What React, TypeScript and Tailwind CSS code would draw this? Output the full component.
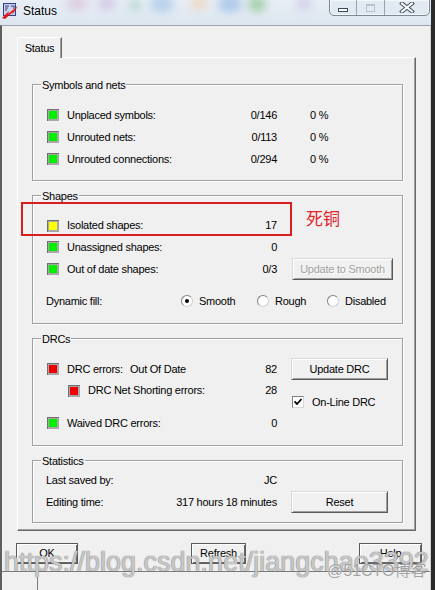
import type { ReactNode } from 'react';

const FONT = "font-['Liberation_Sans',Arial,sans-serif]";

// LED colours, written out so Tailwind picks them up
const ledColor: Record<string, string> = {
  green: 'bg-[#00f000]',
  yellow: 'bg-[#ffff00]',
  red: 'bg-[#ee0000]',
};

function Led({ color }: { color: string }) {
  return (
    <div className="w-3 h-3 shrink-0 bg-[#a8a8a8] p-[2px] shadow-[inset_1px_1px_#707070]">
      <div className={`w-full h-full ${ledColor[color]}`} />
    </div>
  );
}

function WinButton({
  className,
  children,
  disabled,
  strong,
}: {
  className: string;
  children: ReactNode;
  disabled?: boolean;
  strong?: boolean;
}) {
  const frame = strong
    ? 'border border-[#5a5a5a] shadow-[inset_1px_1px_#fff,inset_-1px_-1px_#6a6a6a]'
    : 'border border-t-[#d8d8d8] border-l-[#d8d8d8] border-r-[#5a5a5a] border-b-[#5a5a5a] shadow-[inset_1px_1px_#fff,inset_-1px_-1px_#a0a0a0]';
  return (
    <div
      className={`flex items-center justify-center shrink-0 bg-[#f0f0f0] ${frame} ${className} ${
        disabled ? 'text-[#a0a0a0] [text-shadow:1px_1px_#fff]' : ''
      }`}
    >
      {children}
    </div>
  );
}

function Group({ title, className, children }: { title: string; className: string; children: ReactNode }) {
  return (
    <div className={`relative w-[371px] border border-[#a0a0a0] shadow-[inset_1px_1px_#fff,1px_1px_#fff] ${className}`}>
      <span className="absolute left-[8px] top-[-6px] px-[1px] bg-[#f0f0f0] leading-[13px]">{title}</span>
      {children}
    </div>
  );
}

function StatusRow({
  led,
  label,
  value,
  pct,
  indent = 'pl-[14px]',
  width = 'w-[210px]',
  height = 'h-[22px]',
  children,
}: {
  led: string;
  label: ReactNode;
  value: string;
  pct?: string;
  indent?: string;
  width?: string;
  height?: string;
  children?: ReactNode;
}) {
  return (
    <div className={`flex items-center ${height} ${indent}`}>
      <Led color={led} />
      <div className={`ml-[8px] flex justify-between ${width}`}>
        <span>{label}</span>
        <span>{value}</span>
      </div>
      {pct && <span className="ml-[33px]">{pct}</span>}
      {children}
    </div>
  );
}

function Radio({ checked, label, className }: { checked?: boolean; label: string; className: string }) {
  return (
    <div className={`flex items-center ${className}`}>
      <div className="w-3 h-3 rounded-full bg-white border border-t-[#808080] border-l-[#808080] border-r-[#d0d0d0] border-b-[#d0d0d0] flex items-center justify-center">
        {checked && <div className="w-[4px] h-[4px] rounded-full bg-black" />}
      </div>
      <span className="ml-[6px]">{label}</span>
    </div>
  );
}

function AppIcon() {
  return (
    <svg width="17" height="16" viewBox="0 0 17 16" className="relative ml-[2px] mt-[3px] shrink-0">
      <rect x="1.5" y="0.5" width="12" height="12" fill="#c9d3ee" stroke="#34407f" />
      <path d="M3 3h4M3 5h3M3 7h2M9 3h3v3" stroke="#34407f" strokeWidth="1" fill="none" />
      <path d="M0 15 L7 8 L6 11 L16 3 L10 12 L11 9 L3 16 Z" fill="#e01818" />
    </svg>
  );
}

function TitleBar() {
  return (
    <div className="relative h-[25px] shrink-0 flex items-start overflow-hidden bg-gradient-to-b from-[#e7eef6] to-[#dde6ef]">
      {/* blurred taskbar glimpses behind the glass */}
      <div className="absolute left-[66px] top-[-4px] w-[22px] h-[14px] rounded-full bg-[#d9b8d2] opacity-60 blur-[4px]" />
      <div className="absolute left-[98px] top-[-4px] w-[18px] h-[14px] rounded-full bg-[#c8b4d8] opacity-60 blur-[4px]" />
      <div className="absolute left-[128px] top-[-2px] w-[14px] h-[14px] rounded-full bg-[#a8d0c0] opacity-60 blur-[4px]" />
      <div className="absolute left-[150px] top-[-4px] w-[24px] h-[16px] rounded-full bg-[#a6c6e6] opacity-70 blur-[4px]" />
      <div className="absolute left-[190px] top-[-4px] w-[18px] h-[14px] rounded-full bg-[#f0d4b4] opacity-70 blur-[4px]" />
      <div className="absolute left-[218px] top-[-4px] w-[24px] h-[16px] rounded-full bg-[#98bce6] opacity-70 blur-[4px]" />
      <div className="absolute left-[248px] top-[-4px] w-[18px] h-[16px] rounded-full bg-[#8cc48c] opacity-70 blur-[4px]" />
      <div className="absolute left-[296px] top-[-4px] w-[16px] h-[14px] rounded-full bg-[#c8c0e4] opacity-60 blur-[4px]" />
      <AppIcon />
      <span className="relative ml-[4px] mt-[4px] text-[12px] leading-[15px] text-black [text-shadow:0_0_6px_#fff]">
        Status
      </span>
      {/* caption buttons */}
      <div className="relative ml-auto mr-[1px] mt-[-1px] flex h-[17px] rounded-b-[5px] border border-[#7b8696] bg-[#dfe7f0]/60 shadow-[inset_0_0_0_1px_rgba(255,255,255,0.6)]">
        <div className="w-[27px] flex items-center justify-center border-r border-[#9aa4b0]">
          <div className="mt-[4px] w-[10px] h-[4px] bg-white border border-[#3d4a5c]" />
        </div>
        <div className="w-[28px] flex items-center justify-center border-r border-[#9aa4b0]">
          <div className="w-[9px] h-[8px] border border-[#b8c0ca] shadow-[inset_0_1px_#b8c0ca]" />
        </div>
        <div className="w-[44px] flex items-center justify-center">
          <svg width="16" height="11" viewBox="0 0 16 11">
            <path d="M3 1.5 L13 9.5 M13 1.5 L3 9.5" stroke="#3d4a5c" strokeWidth="4" strokeLinecap="square" />
            <path d="M3 1.5 L13 9.5 M13 1.5 L3 9.5" stroke="#fff" strokeWidth="2" strokeLinecap="square" />
          </svg>
        </div>
      </div>
    </div>
  );
}

export default function App() {
  return (
    <div className={`relative w-[435px] h-[590px] overflow-hidden bg-[#2a2a2a] text-[11px] text-black ${FONT}`}>
      <div className="flex flex-col w-[431px] h-full">
        <TitleBar />

        <div className="flex-1 flex flex-col bg-[#f0f0f0] tracking-[-0.25px] border-t border-t-[#9aa4ae] border-l-2 border-l-[#5e5e5e] border-r border-r-[#cfcfcf]">
          {/* Tab header */}
          <div className="relative z-10 ml-[15px] mt-[11px] -mb-px w-[45px] h-[21px] flex items-center justify-center bg-[#f0f0f0] border-t border-l border-white border-r border-r-[#696969] shadow-[inset_-1px_0_#a0a0a0]">
            Status
          </div>

          {/* Tab panel */}
          <div className="ml-[15px] w-[399px] h-[474px] shrink-0 flex flex-col gap-[14px] pt-[26px] pl-[14px] border border-t-white border-l-white border-r-[#696969] border-b-[#696969] shadow-[inset_-1px_-1px_#a0a0a0]">
            <Group title="Symbols and nets" className="h-[97px] pt-[19px]">
              <StatusRow led="green" label="Unplaced symbols:" value="0/146" pct="0 %" />
              <StatusRow led="green" label="Unrouted nets:" value="0/113" pct="0 %" />
              <StatusRow led="green" label="Unrouted connections:" value="0/294" pct="0 %" />
            </Group>

            <Group title="Shapes" className="h-[129px] pt-[19px]">
              <StatusRow led="yellow" label="Isolated shapes:" value="17" height="h-[21px]" />
              <StatusRow led="green" label="Unassigned shapes:" value="0" />
              <StatusRow led="green" label="Out of date shapes:" value="0/3">
                <WinButton disabled className="ml-[15px] w-[101px] h-[22px]">
                  Update to Smooth
                </WinButton>
              </StatusRow>
              <div className="mt-[10px] h-[22px] flex items-center pl-[13px]">
                <span className="w-[135px]">Dynamic fill:</span>
                <Radio checked label="Smooth" className="w-[76px]" />
                <Radio label="Rough" className="w-[70px]" />
                <Radio label="Disabled" className="" />
              </div>
            </Group>

            <Group title="DRCs" className="h-[108px] pt-[19px] flex">
              <div className="w-[244px]">
                <StatusRow
                  led="red"
                  label={
                    <span className="flex">
                      <span className="w-[63px]">DRC errors:</span>
                      <span>Out Of Date</span>
                    </span>
                  }
                  value="82"
                />
                <StatusRow
                  led="red"
                  label="DRC Net Shorting errors:"
                  value="28"
                  indent="pl-[35px]"
                  width="w-[189px]"
                  height="h-[21px]"
                />
                <div className="mt-[11px]">
                  <StatusRow led="green" label="Waived DRC errors:" value="0" />
                </div>
              </div>
              <div className="ml-[14px] flex flex-col">
                <WinButton className="w-[97px] h-[22px]">Update DRC</WinButton>
                <div className="mt-[14px] ml-[1px] flex items-center">
                  <div className="w-[12px] h-[12px] bg-white border border-t-[#808080] border-l-[#808080] border-r-[#d8d8d8] border-b-[#d8d8d8] flex items-center justify-center">
                    <svg width="8" height="8" viewBox="0 0 8 8">
                      <path d="M0.5 3.5 L3 6 L7.5 1" stroke="#000" strokeWidth="1.8" fill="none" />
                    </svg>
                  </div>
                  <span className="ml-[8px]">On-Line DRC</span>
                </div>
              </div>
            </Group>

            <Group title="Statistics" className="h-[63px] pt-[8px]">
              <div className="h-[22px] flex items-center">
                <div className="w-[244px] pl-[13px] flex justify-between">
                  <span>Last saved by:</span>
                  <span>JC</span>
                </div>
              </div>
              <div className="h-[22px] flex items-center">
                <div className="w-[244px] pl-[13px] flex justify-between">
                  <span>Editing time:</span>
                  <span>317 hours 18 minutes</span>
                </div>
                <WinButton className="ml-[14px] w-[97px] h-[22px]">Reset</WinButton>
              </div>
            </Group>
          </div>

          {/* Dialog buttons */}
          <div className="mt-[12px] ml-[14px] w-[406px] flex justify-between">
            <WinButton strong className="w-[62px] h-[21px]">OK</WinButton>
            <WinButton strong className="w-[55px] h-[21px]">Refresh</WinButton>
            <WinButton strong className="w-[63px] h-[21px]">Help</WinButton>
          </div>

          {/* status strip */}
          <div className="mt-[7px] flex-1 flex border-t border-[#7a7a7a]">
            <div className="w-[36px] border-r border-[#7a7a7a]" />
          </div>
        </div>
      </div>

      {/* Screenshot annotation */}
      <div className="absolute left-[21px] top-[202px] w-[271px] h-[34px] border-2 border-[#d81e1e]" />
      <span className="absolute left-[306px] top-[209px] text-[17px] leading-none text-[#e0252a] font-['Noto_Sans_CJK_SC',sans-serif]">
        死铜
      </span>

      {/* Watermarks */}
      <span className="absolute left-[4px] top-[549px] text-[27px] leading-[27px] whitespace-nowrap text-white/60 [text-shadow:0_0_1px_#777,0_0_1px_#777]">
        https://blog.csdn.net/jiangchao3392
      </span>
      <span className="absolute left-[327px] top-[563px] text-[16px] leading-none whitespace-nowrap text-[#8a8a8a]/80 [text-shadow:0_0_1px_#fff] font-['Liberation_Sans','Noto_Sans_CJK_SC',sans-serif]">
        @51CTO博客
      </span>
    </div>
  );
}
